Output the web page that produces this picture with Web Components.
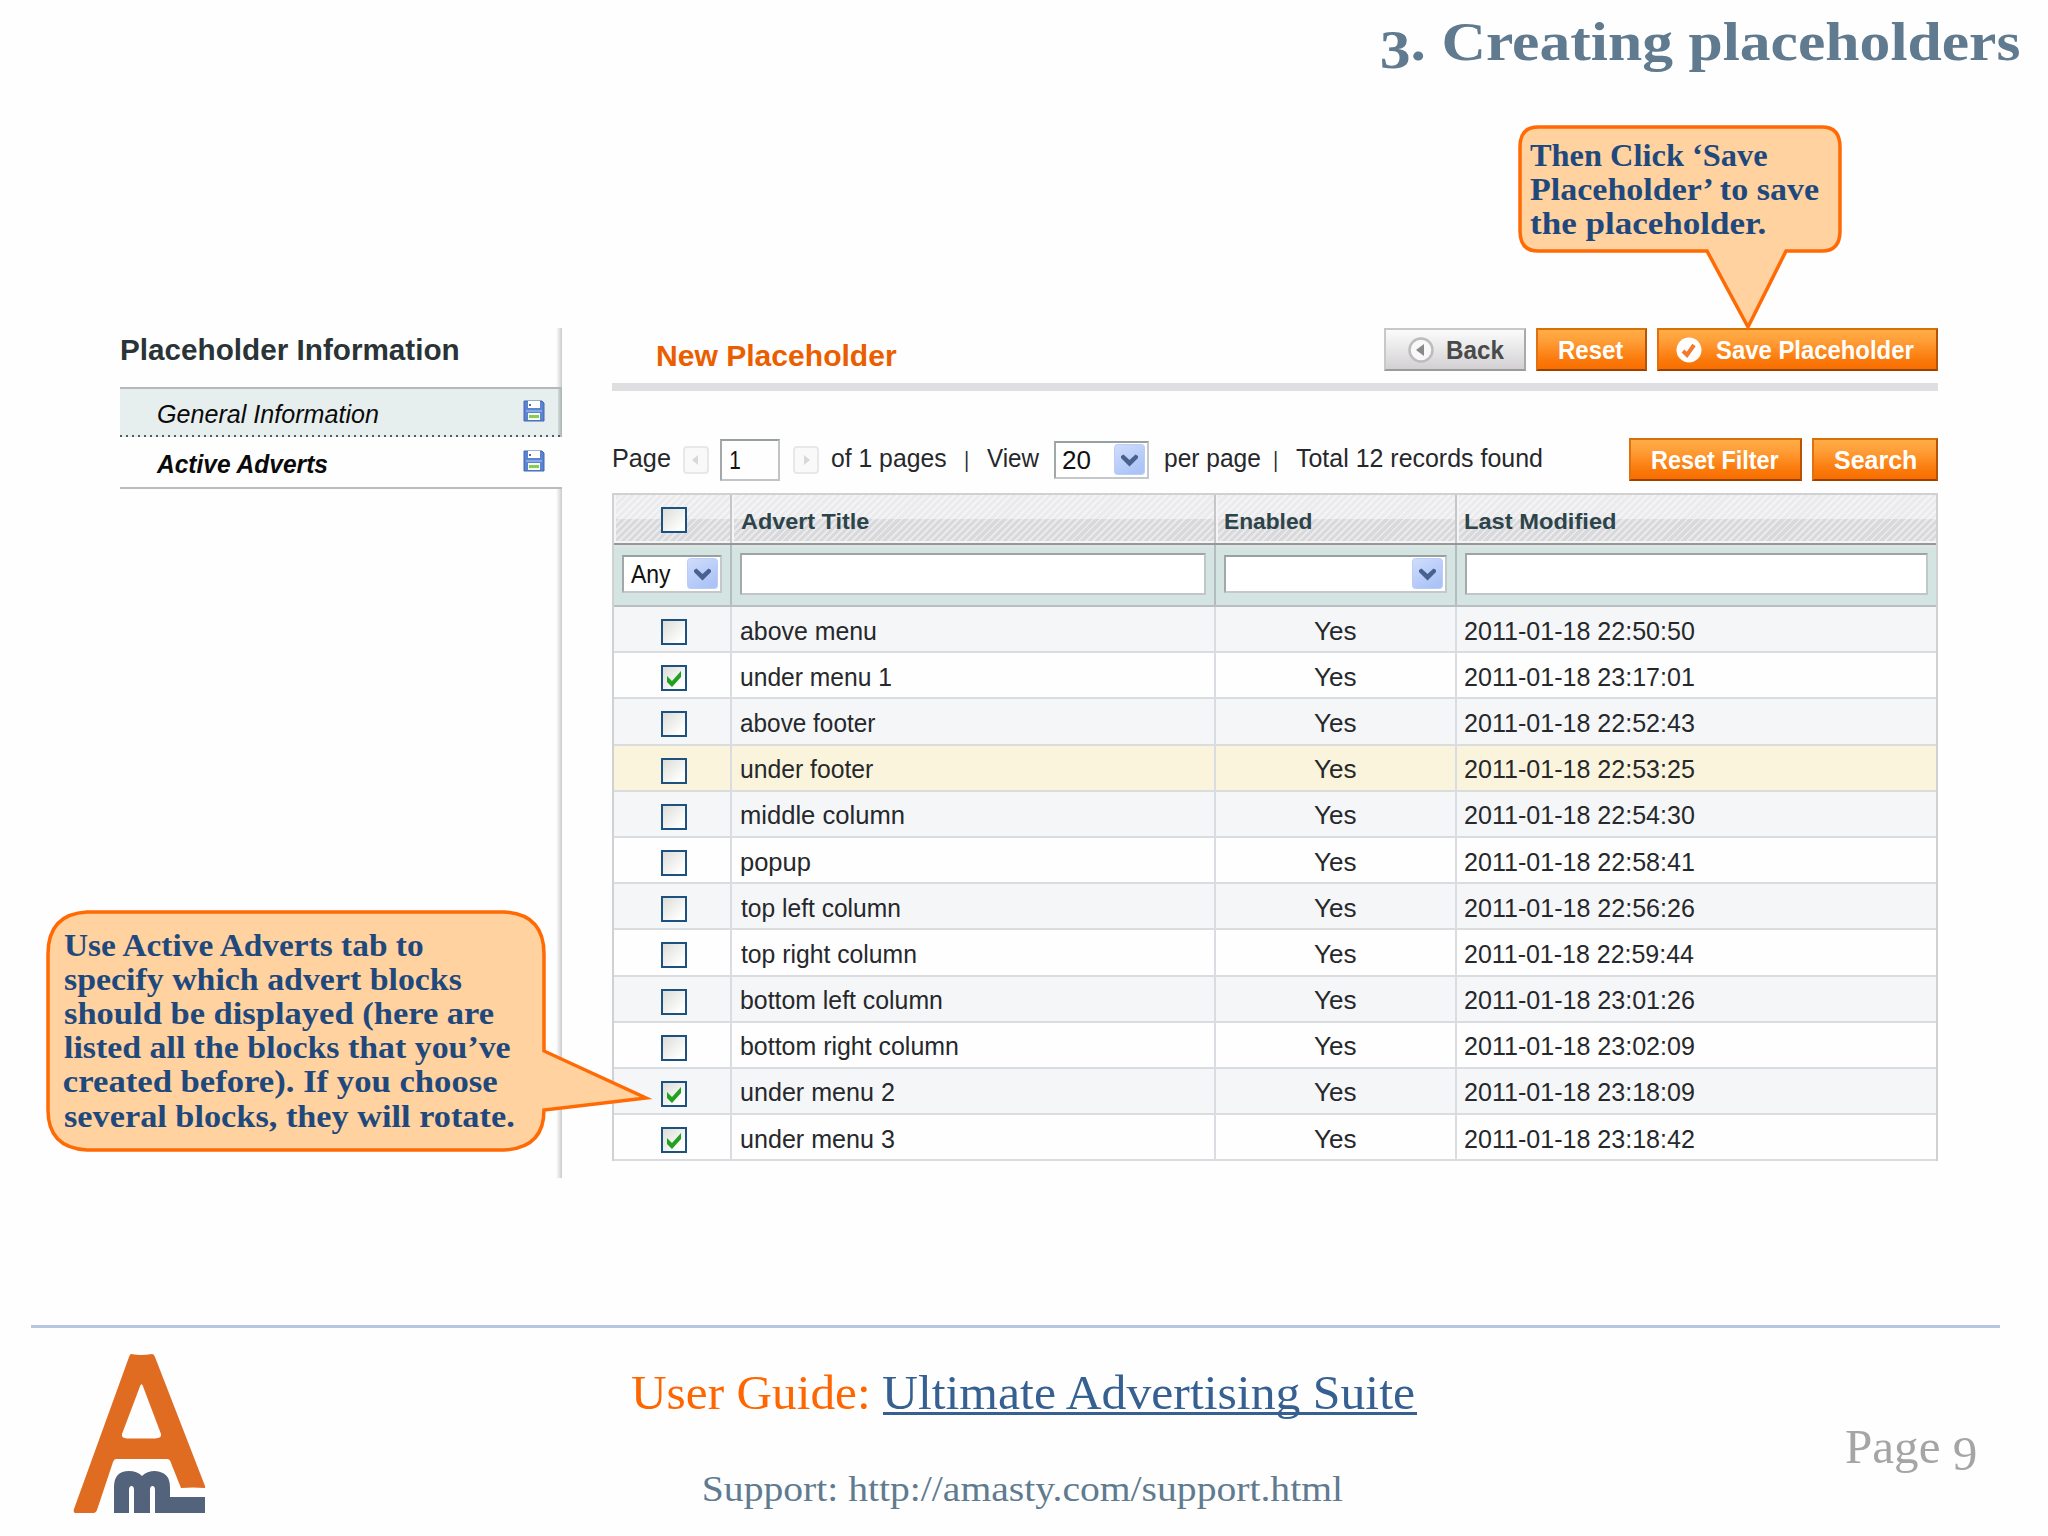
<!DOCTYPE html>
<html lang="en">
<head>
<meta charset="UTF-8">
<title>User Guide: Ultimate Advertising Suite</title>
<style>
  body {
    margin: 0;
    background: #fefefe;
    font-family: "Liberation Sans", Arial, sans-serif;
  }
</style>
</head>
<body>
<guide-slide>
  <fit-text slot="title" w="638"><span style="vertical-align:-8px;line-height:0">3</span>. Creating placeholders</fit-text>
  <side-tabs slot="side"></side-tabs>
  <advert-panel slot="main"></advert-panel>
  <guide-footer slot="footer"></guide-footer>
</guide-slide>

<call-out style="left:1518px;top:125px" width="330" height="208" tx="12" ty="13.5"
  path="M20 2H304Q322 2 322 22V106Q322 126 304 126H268L230 202L189 126H20Q2 126 2 106V22Q2 2 20 2Z">
  <fit-text w="237">Then Click ‘Save</fit-text>
  <fit-text w="291">Placeholder’ to save</fit-text>
  <fit-text w="235.5">the placeholder.</fit-text>
</call-out>

<call-out style="left:46px;top:910px" width="610" height="244" tx="18" ty="18.5"
  path="M41 2H458Q498 4 498 44V141L600 188L498 200Q498 238 458 240H41Q2 238 2 200V44Q2 4 41 2Z">
  <fit-text w="363">Use Active Adverts tab to</fit-text>
  <fit-text w="398">specify which advert blocks</fit-text>
  <fit-text w="429.5">should be displayed (here are</fit-text>
  <fit-text w="446">listed all the blocks that you’ve</fit-text>
  <fit-text w="433">created before). If you choose</fit-text>
  <fit-text w="450">several blocks, they will rotate.</fit-text>
</call-out>

<script>
// Text whose ink is stretched to exactly "w" pixels
class FitText extends HTMLElement {
  constructor() {
    super();
    this.attachShadow({ mode: 'open' }).innerHTML = `
      <style>
        :host { display: block; flex: none; }
        span { display: block; width: max-content; white-space: pre; transform-origin: 0 50%; }
      </style>
      <span><slot></slot></span>`;
  }
  connectedCallback() {
    const w = parseFloat(this.getAttribute('w'));
    const cs = getComputedStyle(this);
    const ctx = document.createElement('canvas').getContext('2d');
    ctx.font = `${cs.fontStyle} ${cs.fontWeight} ${cs.fontSize} ${cs.fontFamily}`;
    const m = ctx.measureText(this.textContent);
    const k = w / (m.actualBoundingBoxLeft + m.actualBoundingBoxRight);
    this.style.width = w + 'px';
    this.shadowRoot.querySelector('span').style.transform =
      `translateX(${m.actualBoundingBoxLeft * k}px) scaleX(${k})`;
  }
}

class GuideSlide extends HTMLElement {
  constructor() {
    super();
    this.attachShadow({ mode: 'open' }).innerHTML = `
      <style>
        :host {
          display: grid;
          grid-template-rows: 328px 997px 211px;
          width: 2048px;
          height: 1536px;
          overflow: hidden;
        }
        header {
          display: flex;
          justify-content: flex-end;
          padding: 10px 28px 0 0;
          font: bold 55px/64px "Liberation Serif", serif;
          color: #607a8f;
        }
        main { display: flex; gap: 50px; padding-left: 120px; }
      </style>
      <header><slot name="title"></slot></header>
      <main><slot name="side"></slot><slot name="main"></slot></main>
      <slot name="footer"></slot>`;
  }
}

class SideTabs extends HTMLElement {
  constructor() {
    super();
    const disk = `
      <svg width="22" height="22" viewBox="0 0 22 22">
        <path d="M1 1H19L21 3V21H1Z" fill="#5b83d0" stroke="#4266ae"/>
        <path d="M5 1H17V8H5Z" fill="#fff"/><path d="M6 4H8V6H6Z" fill="#4a6cad"/>
        <path d="M3 10H19V12H3Z" fill="#86a8e6"/>
        <path d="M5 13H17V20H5Z" fill="#f5faf2"/><path d="M6 15H16V18H6Z" fill="#86cc55"/>
      </svg>`;
    this.attachShadow({ mode: 'open' }).innerHTML = `
      <style>
        :host {
          display: block;
          box-sizing: border-box;
          width: 442px;
          height: 850px;
          background: linear-gradient(90deg, #fefefe, #e6e6e8 50%, #c9cacd) right / 6px 100% no-repeat;
        }
        h3 {
          margin: 0;
          height: 59px;
          box-sizing: border-box;
          padding: 4px 0 0 1px;
          font: bold 29px/36px "Liberation Sans", sans-serif;
          color: #2a3436;
        }
        .tab {
          display: flex;
          justify-content: space-between;
          align-items: center;
          box-sizing: border-box;
          padding: 0 17px 0 38px;
          font-size: 25px;
          line-height: 30px;
          font-style: italic;
          color: #0a0a0a;
        }
        .general {
          height: 50px;
          border-top: 2px solid #b6b9bb;
          background:
            repeating-linear-gradient(90deg, #555b5d 0 2px, transparent 2px 6px) bottom / 100% 2px no-repeat,
            linear-gradient(90deg, #d3dada, #a9b1b2) right / 4px 100% no-repeat,
            #e7eeee;
        }
        .general fit-text { margin-top: 2px; }
        .general svg { margin-top: -5px; }
        .active {
          height: 52px;
          padding-left: 36px;
          font-weight: bold;
          background: #fefefe;
          border-bottom: 2px solid #bcbcc0;
        }
        .active fit-text { margin-top: 4px; }
        .active svg { margin-top: -2px; }
      </style>
      <h3><fit-text w="337">Placeholder Information</fit-text></h3>
      <div class="tab general"><fit-text w="220">General Information</fit-text>${disk}</div>
      <div class="tab active"><fit-text w="173">Active Adverts</fit-text>${disk}</div>`;
  }
}

class MageButton extends HTMLElement {
  constructor() {
    super();
    this.attachShadow({ mode: 'open' }).innerHTML = `
      <style>
        :host {
          display: flex;
          flex: none;
          align-items: center;
          justify-content: center;
          box-sizing: border-box;
          height: 43px;
          border: 2px solid;
          border-color: #d87008 #b85208 #a04000 #e07010;
          background: linear-gradient(#ffac47, #ffa03a 25%, #fb7a0c 75%, #f96e00);
          color: #fff;
          font: bold 25px/30px "Liberation Sans", sans-serif;
        }
        :host([plain]) {
          border-color: #c8c8ca #a9a9ac #9b9b9e #c8c8ca;
          background: linear-gradient(#fbfbfb, #e8e7e8 50%, #d2d0d2);
          color: #4a4a4a;
        }
      </style>
      <slot></slot>`;
  }
}

class CheckBox extends HTMLElement {
  constructor() {
    super();
    const mark = this.hasAttribute('checked') ? '<path d="M6 11L11 16L20 6V12L11 22L6 17Z" fill="#21a121"/>' : '';
    this.attachShadow({ mode: 'open' }).innerHTML = `
      <style>
        :host {
          display: block;
          box-sizing: border-box;
          width: 26px;
          height: 26px;
          border: 2px solid #1c5180;
          background: linear-gradient(135deg, #dcdcd7, #fff 85%);
        }
        svg { display: block; margin: -2px; }
      </style>
      <svg width="26" height="26">${mark}</svg>`;
  }
}

class SelectBox extends HTMLElement {
  constructor() {
    super();
    this.attachShadow({ mode: 'open' }).innerHTML = `
      <style>
        :host {
          display: flex;
          flex: none;
          align-items: center;
          box-sizing: border-box;
          height: 38px;
          padding: 0 2px 0 7px;
          border: 2px solid;
          border-color: #98a0a2 #c4c8ca #c4c8ca #a2a8aa;
          background: #fff;
          color: #111;
          font-size: 25px;
          line-height: 30px;
        }
        svg { margin-left: auto; }
      </style>
      <slot></slot>
      <svg width="31" height="32" viewBox="0 0 31 32">
        <defs><linearGradient id="g" x2=".6" y2="1"><stop stop-color="#d0ddfc"/><stop offset="1" stop-color="#abc3f7"/></linearGradient></defs>
        <rect x=".5" y=".5" width="30" height="30" rx="3" fill="url(#g)" stroke="#bccdf5"/>
        <path d="M7 12L9.500 10.500L15.500 16L21.500 10.500L24 12V14L15.500 22.500L7 14Z" fill="#48618f"/>
      </svg>`;
  }
}

class AdvertGrid extends HTMLElement {
  constructor() {
    super();
    const rows = [
      ['above menu', 135, '22:50:50'],
      ['under menu 1', 150, '23:17:01', true],
      ['above footer', 134, '22:52:43'],
      ['under footer', 132, '22:53:25'],
      ['middle column', 163, '22:54:30'],
      ['popup', 69, '22:58:41'],
      ['top left column', 159, '22:56:26'],
      ['top right column', 175, '22:59:44'],
      ['bottom left column', 201, '23:01:26'],
      ['bottom right column', 217, '23:02:09'],
      ['under menu 2', 153, '23:18:09', true],
      ['under menu 3', 153, '23:18:42', true]
    ];
    const body = rows.map(([title, w, time, on]) => `
      <div class="row">
        <div class="mid"><check-box ${on ? 'checked' : ''}></check-box></div>
        <div><fit-text w="${w}">${title}</fit-text></div>
        <div class="mid"><fit-text w="42">Yes</fit-text></div>
        <div><fit-text w="229">2011-01-18 ${time}</fit-text></div>
      </div>`).join('');
    this.attachShadow({ mode: 'open' }).innerHTML = `
      <style>
        :host {
          display: block;
          box-sizing: border-box;
          border: 2px solid #cfd1d3;
          border-bottom: 0;
          font-size: 25px;
          line-height: 30px;
          color: #26282b;
        }
        .row {
          display: grid;
          grid-template: 100% / 118px 484px 241px 479px;
          box-sizing: border-box;
          height: 46.200px;
          border-bottom: 2px solid #dadce0;
        }
        .row > div {
          display: flex;
          align-items: center;
          box-sizing: border-box;
          padding: 3px 8px 0 9px;
          border-right: 2px solid #d9dce0;
        }
        .row > div:nth-child(4) { padding-left: 8px; border-right: 0; }
        .row > .mid { justify-content: center; padding: 3px 2px 0 0; }
        .row > .mid:first-child { padding: 6px 0 0 3px; }
        .row:nth-of-type(odd) { background: #f5f6f8; }
        .row:nth-of-type(6) { background: #fbf4dd; }
        .row.head {
          height: 50px;
          border-bottom: 2px solid #949898;
          background:
            repeating-linear-gradient(135deg, rgba(255,255,255,.45) 0 2px, transparent 2px 5px),
            linear-gradient(#ebebed 0 24px, #d9d9dc 24px);
          font-weight: bold;
          font-size: 22px;
          color: #2d444a;
        }
        .row.head > div { border-right-color: #c3c7c9; padding-top: 5px; box-shadow: inset 0 -2px #f4f4f5, inset 2px 0 #f4f4f5; }
        .row.head > .mid:first-child { padding: 2px 0 0 3px; }
        .row.filter { height: 62px; border-bottom: 2px solid #b9bfc0; background: #d3e4e1; }
        .row.filter > div { border-right-color: #b3bcbe; padding: 0 8px; box-shadow: inset 0 3px #dce4e4; }
        .row.filter select-box { flex: 1; margin-bottom: 2px; }
        .row.filter > div:nth-child(2), .row.filter > div:nth-child(4) { padding-bottom: 3px; }
        .field {
          flex: 1;
          box-sizing: border-box;
          height: 42px;
          border: 2px solid;
          border-color: #9ea4a6 #c1c6c8 #c1c6c8 #a4aaac;
          background: #fff;
        }
      </style>
      <div class="row head">
        <div class="mid"><check-box></check-box></div>
        <div><fit-text w="128">Advert Title</fit-text></div>
        <div><fit-text w="86">Enabled</fit-text></div>
        <div><fit-text w="150">Last Modified</fit-text></div>
      </div>
      <div class="row filter">
        <div><select-box><fit-text w="40">Any</fit-text></select-box></div>
        <div><span class="field"></span></div>
        <div><select-box></select-box></div>
        <div><span class="field"></span></div>
      </div>${body}`;
  }
}

class AdvertPanel extends HTMLElement {
  constructor() {
    super();
    this.attachShadow({ mode: 'open' }).innerHTML = `
      <style>
        :host { display: block; width: 1326px; }
        .head {
          display: flex;
          align-items: flex-start;
          box-sizing: border-box;
          height: 63px;
          border-bottom: 8px solid #dfdee0;
        }
        h2 {
          margin: 0 auto 0 0;
          padding: 10px 0 0 46px;
          font: bold 30px/36px "Liberation Sans", sans-serif;
          color: #eb5e00;
        }
        mage-button + mage-button { margin-left: 10px; }
        .pager {
          display: flex;
          align-items: center;
          height: 43px;
          margin: 47px 0 12px;
          font-size: 25px;
          line-height: 30px;
          color: #26282b;
        }
        .pager > fit-text { margin-top: -3px; }
        .page {
          display: flex;
          align-items: center;
          box-sizing: border-box;
          width: 60px;
          height: 42px;
          padding-left: 8px;
          border: 2px solid;
          border-color: #999ea0 #c0c4c6 #c0c4c6 #a3a8aa;
          color: #111;
        }
        mage-button svg { flex: none; }
        .sep { font-size: 22px; }
      </style>
      <div class="head">
        <h2><fit-text w="239">New Placeholder</fit-text></h2>
        <mage-button plain style="width:142px">
          <svg width="28" height="28" style="margin-right:12px"><circle cx="14" cy="14" r="11.500" fill="#f8f8f8" stroke="#bdbbbd" stroke-width="2.500"/><path d="M9 14L17 8V20Z" fill="#8a888a"/></svg>
          <fit-text w="57">Back</fit-text>
        </mage-button>
        <mage-button style="width:111px"><fit-text w="65">Reset</fit-text></mage-button>
        <mage-button style="width:281px">
          <svg width="26" height="26" style="margin-right:14px"><circle cx="13" cy="13" r="12.500" fill="#fff"/><path d="M7 14L11 18L18 8" fill="none" stroke="#f2792e" stroke-width="4"/></svg>
          <fit-text w="198" style="margin-right:5px">Save Placeholder</fit-text>
        </mage-button>
      </div>
      <div class="pager">
        <fit-text w="56" style="margin-left:2px">Page</fit-text>
        <svg width="26" height="28" style="margin:0 11px 0 13px"><rect x="1" y="1" width="24" height="26" rx="3" fill="#f9f9fa" stroke="#e8e8eb" stroke-width="2"/><path d="M9 14L15 9V19Z" fill="#d8d8db"/></svg>
        <span class="page"><fit-text w="10">1</fit-text></span>
        <svg width="26" height="28" style="margin:0 13px"><rect x="1" y="1" width="24" height="26" rx="3" fill="#f9f9fa" stroke="#e8e8eb" stroke-width="2"/><path d="M17 14L11 9V19Z" fill="#d8d8db"/></svg>
        <fit-text w="114">of 1 pages</fit-text>
        <fit-text class="sep" w="2.5" style="margin:0 20px 0 18.500px">|</fit-text>
        <fit-text w="53">View</fit-text>
        <select-box style="width:95px;margin:0 16px 0 14px"><fit-text w="27">20</fit-text></select-box>
        <fit-text w="95">per page</fit-text>
        <fit-text class="sep" w="2.5" style="margin:0 20px 0 13.500px">|</fit-text>
        <fit-text w="246">Total 12 records found</fit-text>
        <mage-button style="width:173px;margin-left:auto"><fit-text w="127">Reset Filter</fit-text></mage-button>
        <mage-button style="width:126px"><fit-text w="82">Search</fit-text></mage-button>
      </div>
      <advert-grid></advert-grid>`;
  }
}

class CallOut extends HTMLElement {
  constructor() {
    super();
    const a = name => this.getAttribute(name);
    this.attachShadow({ mode: 'open' }).innerHTML = `
      <style>
        :host {
          position: absolute;
          display: grid;
          font: bold 30.500px/34.200px "Liberation Serif", serif;
          color: #1f497d;
        }
        svg, div { grid-area: 1 / 1; }
        div { padding: ${a('ty')}px 0 0 ${a('tx')}px; }
      </style>
      <svg width="${a('width')}" height="${a('height')}"><path d="${a('path')}" fill="#ffd29f" stroke="#ff6a05" stroke-width="3.500"/></svg>
      <div><slot></slot></div>`;
  }
}

class GuideFooter extends HTMLElement {
  constructor() {
    super();
    this.attachShadow({ mode: 'open' }).innerHTML = `
      <style>
        :host {
          display: block;
          font-family: "Liberation Serif", serif;
        }
        hr {
          width: 1969px;
          height: 3px;
          margin: 0 0 0 31px;
          border: 0;
          background: #b9c6e2;
        }
        .cols { display: grid; grid-template-columns: 632px 1214px auto; }
        .logo { margin: 26px 0 0 73px; }
        .guide {
          display: flex;
          margin-top: 37px;
          font-size: 49px;
          line-height: 56px;
          color: #ff6600;
        }
        a {
          height: 47px;
          margin-left: 16px;
          border-bottom: 3px solid #376092;
          color: #376092;
          text-decoration: none;
        }
        .support {
          padding: 47px 0 0 72px;
          font-size: 36px;
          line-height: 42px;
          color: #607b8f;
        }
        .page {
          padding-top: 91px;
          font-size: 48.500px;
          line-height: 56px;
          color: #a5a5a5;
        }
      </style>
      <hr>
      <div class="cols">
        <svg class="logo" width="134" height="160" viewBox="0 0 134 160">
          <path fill="#e06c22" fill-rule="evenodd" d="M58 0Q68 2 79 0Q81 0 82 3L132 132V134Q120 133 108 134L98 109Q97 105 94 105H43Q41 105 40 108L24 156Q23 159 21 159H2Q0 158 1 155L56 3Q57 0 58 0ZM68.500 30Q67 31 66 35L49 80Q48 84 54 84.500H82Q89 84 88 80L71 35Q70 31 68.500 30Z"/>
          <path fill="#52637b" d="M41 159V133Q41 117 56 117Q64 117 69 122Q74 117 82 117Q97 118 97 133V143H132V159H82V136Q82 132 79.500 132Q77 132 77 136V159H61V136Q61 132 58.500 132Q56 132 56 136V159Z"/>
        </svg>
        <div>
          <div class="guide"><fit-text w="235">User Guide:</fit-text><a><fit-text w="534">Ultimate Advertising Suite</fit-text></a></div>
          <div class="support"><fit-text w="639">Support: http://amasty.com/support.html</fit-text></div>
        </div>
        <div class="page"><fit-text w="130">Page <span style="vertical-align:-7px;line-height:0">9</span></fit-text></div>
      </div>`;
  }
}

customElements.define('guide-slide', GuideSlide);
customElements.define('call-out', CallOut);
customElements.define('mage-button', MageButton);
customElements.define('check-box', CheckBox);
customElements.define('select-box', SelectBox);
customElements.define('advert-grid', AdvertGrid);
customElements.define('side-tabs', SideTabs);
customElements.define('advert-panel', AdvertPanel);
customElements.define('guide-footer', GuideFooter);
customElements.define('fit-text', FitText);
</script>
</body>
</html>
